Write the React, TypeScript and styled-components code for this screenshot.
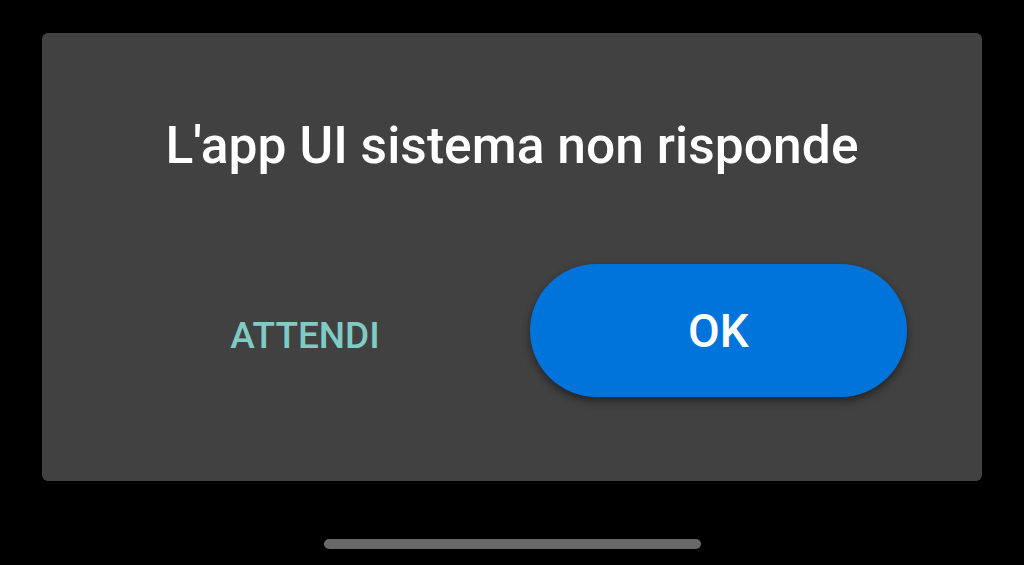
import React from "react";
import styled, { createGlobalStyle } from "styled-components";

const GlobalStyle = createGlobalStyle`
  html, body {
    margin: 0;
    padding: 0;
    background: #000;
    font-family: Roboto, "Noto Sans", sans-serif;
  }
`;

const Screen = styled.div`
  width: 1024px;
  height: 565px;
  background: #000;
  display: flex;
  flex-direction: column;
  align-items: center;
  overflow: hidden;
`;

const Dialog = styled.div`
  margin-top: 33px;
  width: 940px;
  height: 448px;
  box-sizing: border-box;
  background: #414141;
  border-radius: 6px;
  display: flex;
  flex-direction: column;
`;

const Title = styled.h1`
  margin: 82px 0 0 0;
  color: #fff;
  font-size: 51.5px;
  font-weight: 500;
  text-align: center;
  letter-spacing: 0.05px;
`;

const ButtonRow = styled.div`
  margin-top: auto;
  margin-bottom: 84px;
  padding: 0 75px;
  display: flex;
  align-items: center;
  gap: 37px;
`;

const TextButton = styled.button`
  width: 376px;
  background: none;
  border: none;
  padding: 0;
  margin-top: 10px;
  color: #80cbc4;
  font-family: Roboto, sans-serif;
  font-size: 37px;
  font-weight: 500;
  cursor: pointer;
`;

const PillButton = styled.button`
  width: 377px;
  height: 133px;
  border: none;
  border-radius: 67px;
  background: #0174dc;
  color: #fff;
  font-family: Roboto, sans-serif;
  font-size: 46px;
  font-weight: 500;
  box-shadow: 0 4px 8px rgba(0, 0, 0, 0.45);
  cursor: pointer;
`;

const HomeBar = styled.div`
  margin-top: 58px;
  width: 377px;
  height: 10px;
  border-radius: 5px;
  background: #686868;
`;

const App = () => {
  return (
    <>
      <GlobalStyle />
      <Screen>
        <Dialog>
          <Title>L'app UI sistema non risponde</Title>
          <ButtonRow>
            <TextButton>ATTENDI</TextButton>
            <PillButton>OK</PillButton>
          </ButtonRow>
        </Dialog>
        <HomeBar />
      </Screen>
    </>
  );
};

export default App;
